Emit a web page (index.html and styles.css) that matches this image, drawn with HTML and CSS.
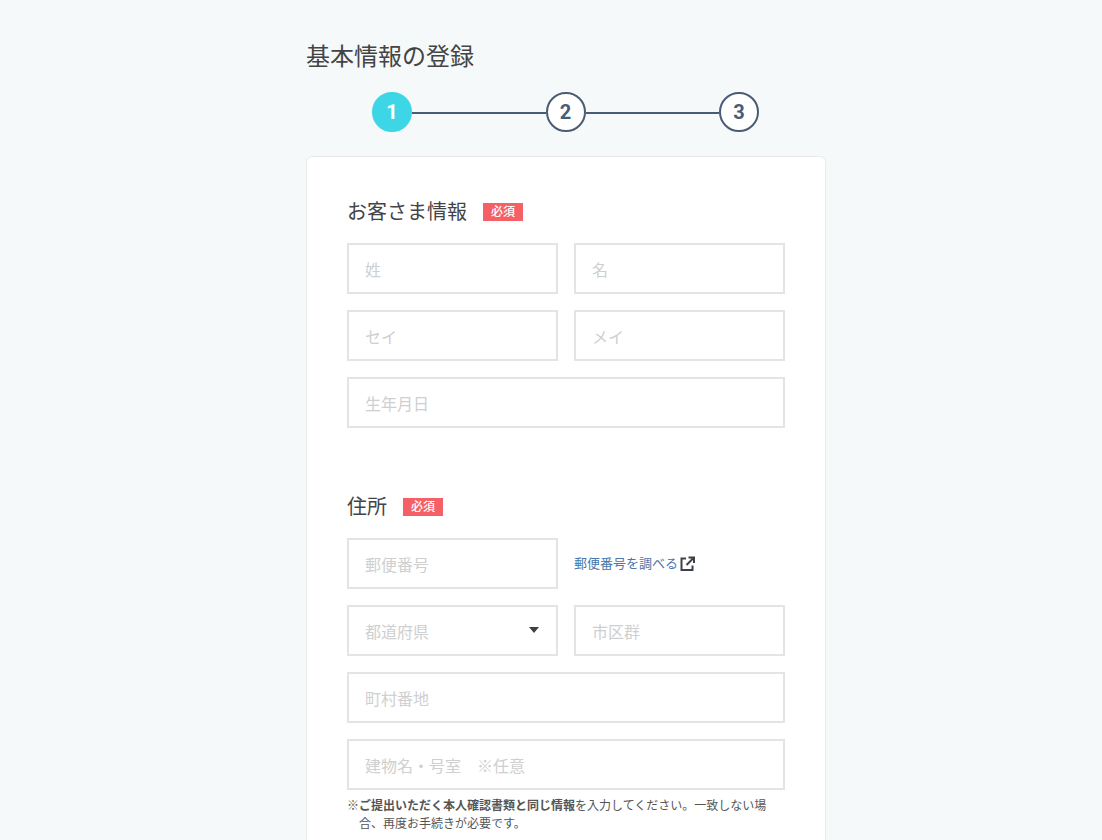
FILE: index.html
```html
<!DOCTYPE html>
<html lang="ja">
<head>
    <meta charset="UTF-8">
    <title>基本情報の登録</title>
    <link rel="stylesheet" href="styles.css">
</head>
<body>
    <div class="container">
        <h1>基本情報の登録</h1>
        <div class="steps">
            <span class="step active">1</span>
            <span class="step-line"></span>
            <span class="step">2</span>
            <span class="step-line"></span>
            <span class="step">3</span>
        </div>
        <form class="card">
            <section class="section">
                <div class="section-title">
                    <h2>お客さま情報</h2>
                    <span class="badge">必須</span>
                </div>
                <div class="fields">
                    <input class="field" placeholder="姓">
                    <input class="field" placeholder="名">
                    <input class="field" placeholder="セイ">
                    <input class="field" placeholder="メイ">
                    <input class="field wide" placeholder="生年月日">
                </div>
            </section>
            <section class="section">
                <div class="section-title">
                    <h2>住所</h2>
                    <span class="badge">必須</span>
                </div>
                <div class="fields">
                    <input class="field" placeholder="郵便番号">
                    <div class="zip-link">
                        <a href="#">郵便番号を調べる</a>
                        <svg class="ext-icon" width="15" height="15" viewBox="0 0 15 15" fill="none" stroke="#3d4148" stroke-width="2">
                            <path d="M6 2.500H1.500v11.500h11V9.500"/>
                            <path d="M8.500 1.500h5.500v5.500M13.500 2 6.500 9"/>
                        </svg>
                    </div>
                    <div class="select-wrap">
                        <select class="field">
                            <option>都道府県</option>
                        </select>
                    </div>
                    <input class="field" placeholder="市区群">
                    <input class="field wide" placeholder="町村番地">
                    <input class="field wide" placeholder="建物名・号室　※任意">
                </div>
                <p class="note">※<b>ご提出いただく本人確認書類と同じ情報</b>を入力してください。一致しない場合、再度お手続きが必要です。</p>
            </section>
        </form>
    </div>
</body>
</html>
```

FILE: styles.css
```css
body {
    font-family: Roboto, 'Noto Sans CJK JP', sans-serif;
    background: #f5f9fa;
    color: #444;
    margin: 0;
    padding-left: 30px;
    display: flex;
    justify-content: center;
}

.container {
    width: 520px;
    padding-top: 40px;
}

h1 {
    font-size: 24px;
    font-weight: 400;
    line-height: 34px;
    margin: 0 0 18px 0;
}

.steps {
    display: flex;
    align-items: center;
    width: 387px;
    margin: 0 0 24px 66px;
}

.step {
    box-sizing: border-box;
    flex: none;
    width: 40px;
    height: 40px;
    display: flex;
    align-items: center;
    justify-content: center;
    border: 2px solid #4a5b75;
    border-radius: 50%;
    background: #fff;
    color: #4a5b75;
    font-size: 20px;
    font-weight: 700;
}

.step.active {
    border-color: #3dd6e6;
    background: #3dd6e6;
    color: #fff;
}

.step-line {
    flex: 1;
    height: 2px;
    margin-top: 1px;
    background: #4a5b75;
}

.card {
    background: #fff;
    border: 1px solid #e8eaed;
    border-radius: 6px;
    padding: 40px 40px 60px 40px;
}

.section + .section {
    margin-top: 64px;
}

.section-title {
    display: flex;
    align-items: center;
    gap: 16px;
    margin-bottom: 16px;
}

h2 {
    font-size: 20px;
    font-weight: 400;
    line-height: 30px;
    margin: 0;
}

.badge {
    width: 40px;
    height: 18px;
    background: #f46066;
    color: #fff;
    font-size: 12px;
    font-weight: 500;
    line-height: 18px;
    text-align: center;
}

.fields {
    display: grid;
    grid-template-columns: 1fr 1fr;
    gap: 16px;
}

.field {
    box-sizing: border-box;
    width: 100%;
    height: 51px;
    padding: 4px 16px 0 16px;
    border: 2px solid #e4e4e4;
    border-radius: 0;
    background: #fff;
    font-family: inherit;
    font-size: 16px;
    outline: none;
}

.field::placeholder {
    color: #cfcfcf;
}

.wide {
    grid-column: 1 / 3;
}

.zip-link {
    display: flex;
    align-items: center;
    gap: 2px;
    font-size: 13px;
    padding-bottom: 3px;
}

.zip-link a {
    color: #4a76a8;
    text-decoration: none;
}

.ext-icon {
    margin-top: 2px;
}

.select-wrap {
    position: relative;
}

.select-wrap select {
    appearance: none;
    color: #cfcfcf;
}

.select-wrap::after {
    content: "";
    position: absolute;
    top: 22px;
    right: 19px;
    border-left: 5.5px solid transparent;
    border-right: 5.5px solid transparent;
    border-top: 6px solid #3d4148;
}

.note {
    font-size: 12px;
    line-height: 18px;
    color: #555;
    margin: 7px 0 0 0;
    padding-left: 1em;
    text-indent: -1em;
}
```
